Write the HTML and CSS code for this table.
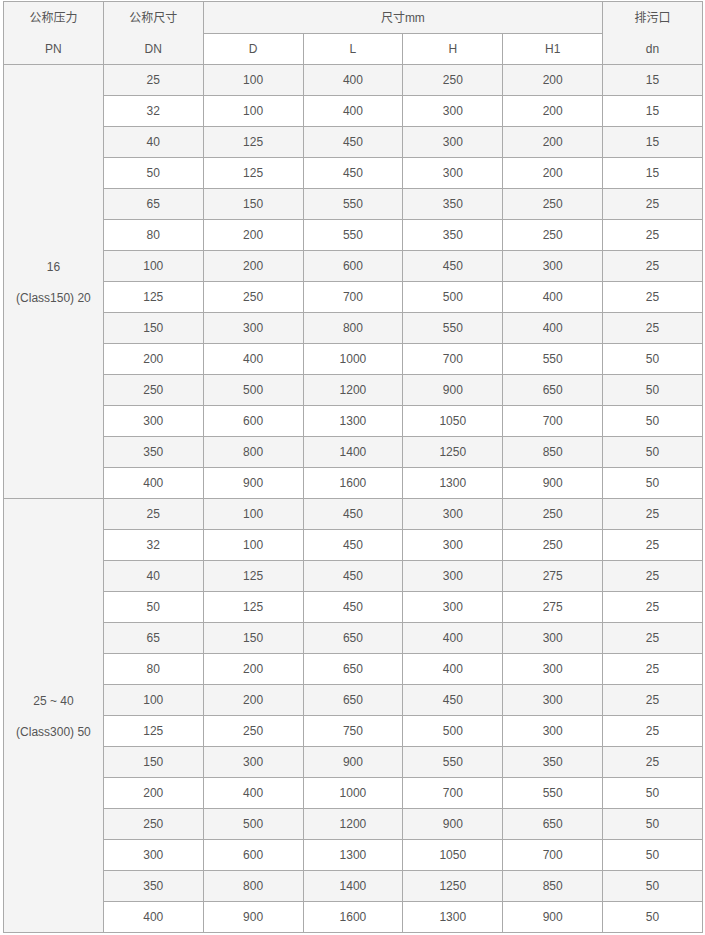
FILE: index.html
```html
<!DOCTYPE html>
<html>
<head>
<meta charset="utf-8">
<link rel="stylesheet" href="styles.css">
</head>
<body>
<table class="spec">
  <colgroup>
    <col class="c"><col class="c"><col class="c"><col class="c"><col class="c"><col class="c"><col class="c">
  </colgroup>
  <thead>
    <tr>
      <th rowspan="2" class="head2"><div class="ln">公称压力</div><div class="ln">PN</div></th>
      <th rowspan="2" class="head2"><div class="ln">公称尺寸</div><div class="ln">DN</div></th>
      <th colspan="4" class="span">尺寸mm</th>
      <th rowspan="2" class="head2"><div class="ln">排污口</div><div class="ln">dn</div></th>
    </tr>
    <tr class="sub">
      <th>D</th><th>L</th><th>H</th><th>H1</th>
    </tr>
  </thead>
  <tbody>
    <tr class="odd"><td rowspan="14" class="group"><div class="ln">16</div><div class="ln">(Class150) 20</div></td><td>25</td><td>100</td><td>400</td><td>250</td><td>200</td><td>15</td></tr>
    <tr><td>32</td><td>100</td><td>400</td><td>300</td><td>200</td><td>15</td></tr>
    <tr class="odd"><td>40</td><td>125</td><td>450</td><td>300</td><td>200</td><td>15</td></tr>
    <tr><td>50</td><td>125</td><td>450</td><td>300</td><td>200</td><td>15</td></tr>
    <tr class="odd"><td>65</td><td>150</td><td>550</td><td>350</td><td>250</td><td>25</td></tr>
    <tr><td>80</td><td>200</td><td>550</td><td>350</td><td>250</td><td>25</td></tr>
    <tr class="odd"><td>100</td><td>200</td><td>600</td><td>450</td><td>300</td><td>25</td></tr>
    <tr><td>125</td><td>250</td><td>700</td><td>500</td><td>400</td><td>25</td></tr>
    <tr class="odd"><td>150</td><td>300</td><td>800</td><td>550</td><td>400</td><td>25</td></tr>
    <tr><td>200</td><td>400</td><td>1000</td><td>700</td><td>550</td><td>50</td></tr>
    <tr class="odd"><td>250</td><td>500</td><td>1200</td><td>900</td><td>650</td><td>50</td></tr>
    <tr><td>300</td><td>600</td><td>1300</td><td>1050</td><td>700</td><td>50</td></tr>
    <tr class="odd"><td>350</td><td>800</td><td>1400</td><td>1250</td><td>850</td><td>50</td></tr>
    <tr><td>400</td><td>900</td><td>1600</td><td>1300</td><td>900</td><td>50</td></tr>

    <tr class="odd"><td rowspan="14" class="group"><div class="ln">25 ~ 40</div><div class="ln">(Class300) 50</div></td><td>25</td><td>100</td><td>450</td><td>300</td><td>250</td><td>25</td></tr>
    <tr><td>32</td><td>100</td><td>450</td><td>300</td><td>250</td><td>25</td></tr>
    <tr class="odd"><td>40</td><td>125</td><td>450</td><td>300</td><td>275</td><td>25</td></tr>
    <tr><td>50</td><td>125</td><td>450</td><td>300</td><td>275</td><td>25</td></tr>
    <tr class="odd"><td>65</td><td>150</td><td>650</td><td>400</td><td>300</td><td>25</td></tr>
    <tr><td>80</td><td>200</td><td>650</td><td>400</td><td>300</td><td>25</td></tr>
    <tr class="odd"><td>100</td><td>200</td><td>650</td><td>450</td><td>300</td><td>25</td></tr>
    <tr><td>125</td><td>250</td><td>750</td><td>500</td><td>300</td><td>25</td></tr>
    <tr class="odd"><td>150</td><td>300</td><td>900</td><td>550</td><td>350</td><td>25</td></tr>
    <tr><td>200</td><td>400</td><td>1000</td><td>700</td><td>550</td><td>50</td></tr>
    <tr class="odd"><td>250</td><td>500</td><td>1200</td><td>900</td><td>650</td><td>50</td></tr>
    <tr><td>300</td><td>600</td><td>1300</td><td>1050</td><td>700</td><td>50</td></tr>
    <tr class="odd"><td>350</td><td>800</td><td>1400</td><td>1250</td><td>850</td><td>50</td></tr>
    <tr><td>400</td><td>900</td><td>1600</td><td>1300</td><td>900</td><td>50</td></tr>
  </tbody>
</table>
</body>
</html>
```

FILE: styles.css
```css
html, body {
  margin: 0;
  padding: 0;
  background: #ffffff;
}
body {
  padding: 2px 0 0 3px;
  font-family: Arial, "Liberation Sans", "Noto Sans CJK SC", sans-serif;
  font-size: 12px;
  color: #555555;
}
.spec {
  border-collapse: collapse;
  table-layout: fixed;
  width: 700px;
  margin-top: -1px;
}
.spec th,
.spec td {
  border: 1px solid #aaaaaa;
  height: 30px;
  padding: 0;
  text-align: center;
  vertical-align: middle;
  font-weight: normal;
  line-height: 30px;
  white-space: nowrap;
}
.spec thead th {
  background: #f4f4f4;
}
.spec thead tr.sub th {
  background: #ffffff;
}
.spec th.span {
  height: 28px;
  padding-top: 2px;
  line-height: 28px;
}
.spec tr.odd td {
  background: #f4f4f4;
}
.spec td.group {
  background: #f4f4f4;
}
.ln {
  height: 31px;
  line-height: 33px;
}
.head2 .ln:first-child {
  line-height: 32px;
}
```
